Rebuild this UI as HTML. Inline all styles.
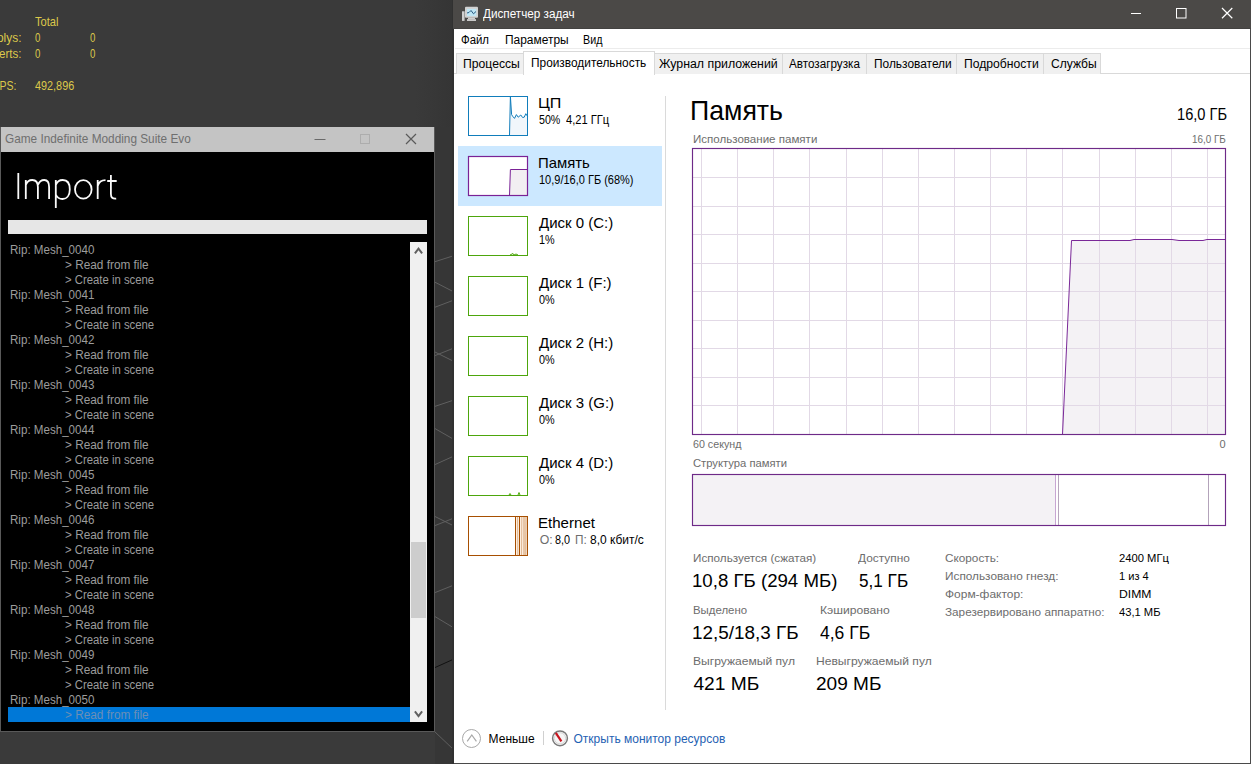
<!DOCTYPE html>
<html><head><meta charset="utf-8"><style>
html,body{margin:0;padding:0;width:1251px;height:764px;overflow:hidden;background:#3a3a3a;position:relative}
.t{position:absolute;white-space:nowrap;line-height:1;font-family:"Liberation Sans", sans-serif;transform-origin:0 0}
.a{position:absolute}
</style></head><body>
<!-- viewport lines -->
<div class="a" style="left:435px;top:127px;width:17px;height:637px;background:#363636"></div>
<div class="a" style="left:415px;top:0;width:37px;height:127px;background:linear-gradient(to right,#3a3a3a,#353535)"></div>
<svg class="a" style="left:0;top:0" width="1251" height="764">
 <g stroke="#6a6a6a" stroke-width="1" fill="none" opacity="0.8">
  <line x1="434" y1="262" x2="454" y2="255.6"/>
  <line x1="434" y1="281.7" x2="454" y2="292"/>
  <line x1="434" y1="307.6" x2="454" y2="300"/>
  <line x1="434" y1="356" x2="454" y2="348"/>
  <line x1="434" y1="351.5" x2="454" y2="361.5"/>
  <line x1="434" y1="406.7" x2="454" y2="400"/>
  <line x1="434" y1="428" x2="454" y2="439.5"/>
  <line x1="434" y1="465" x2="454" y2="456"/>
  <line x1="434" y1="516" x2="454" y2="526"/>
  <line x1="434" y1="526" x2="454" y2="518"/>
  <line x1="434" y1="593" x2="454" y2="585"/>
  <line x1="434" y1="616" x2="454" y2="628"/>
  <line x1="434" y1="731" x2="454" y2="750"/>
 </g>
 <line x1="434" y1="668" x2="454" y2="659" stroke="#111" stroke-width="1"/>
</svg>

<!-- Game window -->
<div class="a" style="left:0;top:127px;width:433px;height:604px;border:1px solid #595959;border-top:none;background:#000"></div>
<div class="a" style="left:1px;top:127px;width:433px;height:25px;background:#c4c4c4"></div>
<svg class="a" style="left:300px;top:127px" width="134" height="25">
 <line x1="14.5" y1="12.5" x2="25.5" y2="12.5" stroke="#6a6a6a" stroke-width="1"/>
 <rect x="60.5" y="7.5" width="9" height="9" fill="none" stroke="#adadad" stroke-width="1"/>
 <path d="M106 7 L116 17 M116 7 L106 17" stroke="#5a5a5a" stroke-width="1.2" fill="none"/>
</svg>
<svg class="a" style="left:0;top:0" width="130" height="215">
 <g fill="none" stroke="#fafafa" stroke-width="1.8">
  <path d="M18.3 173 V199"/>
  <path d="M25.8 180 V199 M25.8 185 C27 181.5 29.5 180 32.3 180 C36 180 37.9 182.5 37.9 187 V199 M37.9 185 C39.2 181.5 41.5 180 44.3 180 C48 180 49.1 182.5 49.1 187 V199"/>
  <path d="M55.8 180 V208 M55.8 185 C57 181.6 59.5 180 62.8 180 C67.5 180 69.8 184 69.8 189.4 C69.8 195 67 199 62.5 199 C59.3 199 57 197.3 55.8 194.5"/>
  <ellipse cx="83.3" cy="189.4" rx="8.3" ry="9.3"/>
  <path d="M97.7 180 V199 M97.7 186 C98.8 182.2 101.5 180.2 105.5 180.2"/>
  <path d="M110.9 175 V194 C110.9 197.5 112.6 199 116.2 198.6 M107.2 181 H116.7"/>
 </g>
</svg>
<div class="a" style="left:8px;top:220px;width:419px;height:14px;background:#e6e6e6"></div>
<div class="a" style="left:410px;top:242px;width:17px;height:480px;background:#f0f0f0"></div>
<div class="a" style="left:411px;top:542px;width:15px;height:76px;background:#cdcdcd"></div>
<svg class="a" style="left:410px;top:242px" width="17" height="480">
 <path d="M4.9 11.3 L8.5 6.7 L12.1 11.3" stroke="#606060" stroke-width="2" fill="none"/>
 <path d="M4.9 469.3 L8.5 474 L12.1 469.3" stroke="#606060" stroke-width="2" fill="none"/>
</svg>
<div class="a" style="left:8px;top:707px;width:402px;height:15px;background:#0078d7"></div>

<!-- Task Manager -->
<div class="a" style="left:453px;top:0;width:796px;height:763px;border:1px solid #4a4a4a;border-top:none;border-left:none;background:#fff;padding-left:1px"></div>
<div class="a" style="left:452px;top:0;width:2px;height:764px;background:#313131"></div>
<div class="a" style="left:453px;top:0;width:798px;height:29px;background:#4b4947;border-bottom:0"></div><div class="a" style="left:453px;top:28px;width:798px;height:1px;background:#434241"></div>
<svg class="a" style="left:460px;top:4px" width="20" height="20">
 <rect x="2" y="7.3" width="2.6" height="9.6" fill="#cfcfcf"/>
 <rect x="5" y="2.8" width="13" height="10.9" rx="1" fill="#d2d2d2"/>
 <rect x="7" y="4.9" width="9.3" height="7.2" fill="#bfe6f5"/>
 <path d="M7 9 L9 8.5 L11 6.5 L13.5 9.8 L16 7.5" stroke="#2a5a80" stroke-width="1" fill="none"/>
 <rect x="8" y="13.7" width="7" height="1.5" fill="#cfcfcf"/>
 <rect x="7" y="15.2" width="9" height="1.7" fill="#d8d8d8"/>
</svg>
<svg class="a" style="left:1100px;top:0" width="150" height="28">
 <line x1="31" y1="13.5" x2="41" y2="13.5" stroke="#fff" stroke-width="1"/>
 <rect x="76.5" y="8.5" width="9.5" height="9.5" fill="none" stroke="#fff" stroke-width="1"/>
 <path d="M122 8 L132.3 18.2 M132.3 8 L122 18.2" stroke="#fff" stroke-width="1.2" fill="none"/>
</svg>
<div class="a" style="left:455px;top:48px;width:795px;height:1px;background:#ececec"></div>
<div class="a" style="left:454px;top:73px;width:796px;height:1px;background:#d9d9d9"></div>
<!-- tabs -->
<div class="a" style="left:456px;top:53px;width:66px;height:20px;background:#f0f0f0;border:1px solid #d9d9d9;border-bottom:none"></div>
<div class="a" style="left:654px;top:53px;width:128px;height:20px;background:#f0f0f0;border:1px solid #d9d9d9;border-bottom:none"></div>
<div class="a" style="left:782px;top:53px;width:84px;height:20px;background:#f0f0f0;border:1px solid #d9d9d9;border-bottom:none"></div>
<div class="a" style="left:866px;top:53px;width:90px;height:20px;background:#f0f0f0;border:1px solid #d9d9d9;border-bottom:none"></div>
<div class="a" style="left:956px;top:53px;width:87px;height:20px;background:#f0f0f0;border:1px solid #d9d9d9;border-bottom:none"></div>
<div class="a" style="left:1043px;top:53px;width:56px;height:20px;background:#f0f0f0;border:1px solid #d9d9d9;border-bottom:none"></div>
<div class="a" style="left:523px;top:51px;width:130px;height:23px;background:#fff;border:1px solid #d9d9d9;border-bottom:none"></div>

<!-- left panel -->
<div class="a" style="left:458px;top:146px;width:204px;height:60px;background:#cce8ff"></div>
<div class="a" style="left:665px;top:96px;width:1px;height:614px;background:#dadada"></div>

<svg class="a" style="left:0;top:0" width="1251" height="764">
 <!-- CPU -->
 <path d="M509.5 135.5 L510.4 96.5 L511.6 114.6 L512.6 116.2 L514.5 118.4 L516.4 114.6 L518.2 117.2 L520.8 115 L522.6 117.5 L524.2 117.2 L525.8 113.7 L527.5 116.2 L527.5 135.5 Z" fill="#f1f6fb" stroke="#117dbb" stroke-width="1"/>
 <rect x="468.5" y="96.5" width="59" height="39" fill="none" stroke="#117dbb" stroke-width="1"/>
 <!-- Memory -->
 <rect x="468.5" y="156.5" width="59" height="39" fill="#fff"/>
 <path d="M509.5 195.5 L510.4 169.5 L527.5 169.5 L527.5 195.5 Z" fill="#f2eff2" stroke="#7a2296" stroke-width="1"/>
 <rect x="468.5" y="156.5" width="59" height="39" fill="none" stroke="#7a2296" stroke-width="1.2"/>
 <!-- disks -->
 <g fill="none" stroke="#4da60c" stroke-width="1">
  <rect x="468.5" y="216.5" width="59" height="39"/>
  <rect x="468.5" y="276.5" width="59" height="39"/>
  <rect x="468.5" y="336.5" width="59" height="39"/>
  <rect x="468.5" y="396.5" width="59" height="39"/>
  <rect x="468.5" y="456.5" width="59" height="39"/>
  <path d="M510 255 L512 254 L513 253.5 L514 255 L516 254 L518 255"/>
  <path d="M509 495 L510 493.5 L511 495 M518 495 L519 492.5 L520 495"/>
 </g>
 <!-- Ethernet -->
 <rect x="515.5" y="516.5" width="12" height="39" fill="#fdeee0"/>
 <g stroke="#a74f01" stroke-width="1" fill="none">
  <rect x="468.5" y="516.5" width="59" height="39"/>
  <line x1="515.5" y1="516.5" x2="515.5" y2="555.5"/>
  <line x1="519.5" y1="516.5" x2="519.5" y2="555.5"/>
  <line x1="524" y1="516.5" x2="524" y2="555.5" stroke-dasharray="1 1"/>
  <line x1="517.5" y1="516.5" x2="517.8" y2="555.5" opacity="0.35"/>
  <line x1="521.8" y1="516.5" x2="521.5" y2="555.5" opacity="0.35"/>
  <line x1="526" y1="516.5" x2="525.8" y2="555.5" opacity="0.45"/>
 </g>
</svg>

<!-- right panel memory graph -->
<svg class="a" style="left:0;top:0" width="1251" height="764">
 <path d="M1062.5 434.5 L1071.5 240.5 L1130 240.5 L1134 239.5 L1172 239.5 L1179 240.5 L1203 240.5 L1207 239.5 L1225.5 239.5 L1225.5 434.5 Z" fill="#f4f2f5"/>
 <g stroke="#e2d9e6" stroke-width="1">
  <line x1="701.5" y1="149" x2="701.5" y2="434"/>
  <line x1="737.5" y1="149" x2="737.5" y2="434"/>
  <line x1="773.5" y1="149" x2="773.5" y2="434"/>
  <line x1="809.5" y1="149" x2="809.5" y2="434"/>
  <line x1="846.5" y1="149" x2="846.5" y2="434"/>
  <line x1="882.5" y1="149" x2="882.5" y2="434"/>
  <line x1="918.5" y1="149" x2="918.5" y2="434"/>
  <line x1="954.5" y1="149" x2="954.5" y2="434"/>
  <line x1="990.5" y1="149" x2="990.5" y2="434"/>
  <line x1="1026.5" y1="149" x2="1026.5" y2="434"/>
  <line x1="1062.5" y1="149" x2="1062.5" y2="434"/>
  <line x1="1099.5" y1="149" x2="1099.5" y2="434"/>
  <line x1="1135.5" y1="149" x2="1135.5" y2="434"/>
  <line x1="1171.5" y1="149" x2="1171.5" y2="434"/>
  <line x1="1207.5" y1="149" x2="1207.5" y2="434"/>
  <line x1="693" y1="177.5" x2="1225" y2="177.5"/>
  <line x1="693" y1="206.5" x2="1225" y2="206.5"/>
  <line x1="693" y1="234.5" x2="1225" y2="234.5"/>
  <line x1="693" y1="263.5" x2="1225" y2="263.5"/>
  <line x1="693" y1="291.5" x2="1225" y2="291.5"/>
  <line x1="693" y1="320.5" x2="1225" y2="320.5"/>
  <line x1="693" y1="348.5" x2="1225" y2="348.5"/>
  <line x1="693" y1="377.5" x2="1225" y2="377.5"/>
  <line x1="693" y1="405.5" x2="1225" y2="405.5"/>
 </g>
 <path d="M1062.5 434.5 L1071.5 240.5 L1130 240.5 L1134 239.5 L1172 239.5 L1179 240.5 L1203 240.5 L1207 239.5 L1225.5 239.5" fill="none" stroke="#7a2898" stroke-width="1"/>
 <rect x="692.5" y="148.5" width="533" height="286" fill="none" stroke="#6e2a88" stroke-width="1.15"/>
 <!-- composition -->
 <rect x="692.5" y="474.5" width="363" height="51" fill="#f4f2f5"/>
 <line x1="1055.5" y1="475" x2="1055.5" y2="525" stroke="#c8a6d3" stroke-width="1"/>
 <line x1="1058.5" y1="475" x2="1058.5" y2="525" stroke="#b7a6bd" stroke-width="1"/>
 <line x1="1208.5" y1="475" x2="1208.5" y2="525" stroke="#b3a3ba" stroke-width="1"/>
 <rect x="692.5" y="474.5" width="533" height="51" fill="none" stroke="#6e2a88" stroke-width="1.15"/>
</svg>

<!-- footer -->
<svg class="a" style="left:455px;top:722px" width="130" height="34">
 <circle cx="16.5" cy="16.5" r="9" fill="none" stroke="#a8a8a8" stroke-width="1"/>
 <path d="M12.2 19.4 L16.8 13 L21.4 19.4" fill="none" stroke="#a8a8a8" stroke-width="1.2"/>
 <line x1="88.5" y1="9" x2="88.5" y2="23" stroke="#d0d0d0" stroke-width="1"/>
 <circle cx="105" cy="16.3" r="7.4" fill="#f6f6f6" stroke="#7a7a7a" stroke-width="1.5"/>
 <circle cx="105" cy="16.3" r="5.6" fill="none" stroke="#d8d8d8" stroke-width="1"/>
 <path d="M100.8 10.8 L106.4 19.4" stroke="#c8141e" stroke-width="2.2"/>
</svg>

<div class="t" style="left:34.80px;top:14.95px;font-size:13px;color:#dcc84a;transform:scaleX(0.8559);">Total</div>
<div class="t" style="left:-10.72px;top:30.95px;font-size:13px;color:#dcc84a;transform:scaleX(0.9175);">Polys:</div>
<div class="t" style="left:35.00px;top:30.95px;font-size:13px;color:#dcc84a;transform:scaleX(0.7429);">0</div>
<div class="t" style="left:89.50px;top:30.95px;font-size:13px;color:#dcc84a;transform:scaleX(0.7429);">0</div>
<div class="t" style="left:-8.50px;top:46.95px;font-size:13px;color:#dcc84a;transform:scaleX(0.8889);">Verts:</div>
<div class="t" style="left:35.00px;top:46.95px;font-size:13px;color:#dcc84a;transform:scaleX(0.7429);">0</div>
<div class="t" style="left:89.50px;top:46.95px;font-size:13px;color:#dcc84a;transform:scaleX(0.7429);">0</div>
<div class="t" style="left:-6.61px;top:78.95px;font-size:13px;color:#dcc84a;transform:scaleX(0.8064);">FPS:</div>
<div class="t" style="left:35.00px;top:78.95px;font-size:13px;color:#dcc84a;transform:scaleX(0.8340);">492,896</div>
<div class="t" style="left:4.80px;top:132.63px;font-size:12.2px;color:#6f6f6f;transform:scaleX(0.9690);">Game Indefinite Modding Suite Evo</div>
<div class="t" style="left:10.06px;top:243.54px;font-size:12.3px;color:#9c9c9c;transform:scaleX(0.9424);">Rip: Mesh_0040</div>
<div class="t" style="left:65.00px;top:258.55px;font-size:12.3px;color:#9c9c9c;transform:scaleX(0.9599);">&gt; Read from file</div>
<div class="t" style="left:65.00px;top:273.55px;font-size:12.3px;color:#9c9c9c;transform:scaleX(0.9217);">&gt; Create in scene</div>
<div class="t" style="left:10.06px;top:288.55px;font-size:12.3px;color:#9c9c9c;transform:scaleX(0.9424);">Rip: Mesh_0041</div>
<div class="t" style="left:65.00px;top:303.55px;font-size:12.3px;color:#9c9c9c;transform:scaleX(0.9599);">&gt; Read from file</div>
<div class="t" style="left:65.00px;top:318.55px;font-size:12.3px;color:#9c9c9c;transform:scaleX(0.9217);">&gt; Create in scene</div>
<div class="t" style="left:10.06px;top:333.55px;font-size:12.3px;color:#9c9c9c;transform:scaleX(0.9424);">Rip: Mesh_0042</div>
<div class="t" style="left:65.00px;top:348.55px;font-size:12.3px;color:#9c9c9c;transform:scaleX(0.9599);">&gt; Read from file</div>
<div class="t" style="left:65.00px;top:363.55px;font-size:12.3px;color:#9c9c9c;transform:scaleX(0.9217);">&gt; Create in scene</div>
<div class="t" style="left:10.06px;top:378.55px;font-size:12.3px;color:#9c9c9c;transform:scaleX(0.9424);">Rip: Mesh_0043</div>
<div class="t" style="left:65.00px;top:393.55px;font-size:12.3px;color:#9c9c9c;transform:scaleX(0.9599);">&gt; Read from file</div>
<div class="t" style="left:65.00px;top:408.55px;font-size:12.3px;color:#9c9c9c;transform:scaleX(0.9217);">&gt; Create in scene</div>
<div class="t" style="left:10.06px;top:423.55px;font-size:12.3px;color:#9c9c9c;transform:scaleX(0.9424);">Rip: Mesh_0044</div>
<div class="t" style="left:65.00px;top:438.55px;font-size:12.3px;color:#9c9c9c;transform:scaleX(0.9599);">&gt; Read from file</div>
<div class="t" style="left:65.00px;top:453.55px;font-size:12.3px;color:#9c9c9c;transform:scaleX(0.9217);">&gt; Create in scene</div>
<div class="t" style="left:10.06px;top:468.55px;font-size:12.3px;color:#9c9c9c;transform:scaleX(0.9424);">Rip: Mesh_0045</div>
<div class="t" style="left:65.00px;top:483.55px;font-size:12.3px;color:#9c9c9c;transform:scaleX(0.9599);">&gt; Read from file</div>
<div class="t" style="left:65.00px;top:498.55px;font-size:12.3px;color:#9c9c9c;transform:scaleX(0.9217);">&gt; Create in scene</div>
<div class="t" style="left:10.06px;top:513.54px;font-size:12.3px;color:#9c9c9c;transform:scaleX(0.9424);">Rip: Mesh_0046</div>
<div class="t" style="left:65.00px;top:528.54px;font-size:12.3px;color:#9c9c9c;transform:scaleX(0.9599);">&gt; Read from file</div>
<div class="t" style="left:65.00px;top:543.54px;font-size:12.3px;color:#9c9c9c;transform:scaleX(0.9217);">&gt; Create in scene</div>
<div class="t" style="left:10.06px;top:558.54px;font-size:12.3px;color:#9c9c9c;transform:scaleX(0.9424);">Rip: Mesh_0047</div>
<div class="t" style="left:65.00px;top:573.54px;font-size:12.3px;color:#9c9c9c;transform:scaleX(0.9599);">&gt; Read from file</div>
<div class="t" style="left:65.00px;top:588.54px;font-size:12.3px;color:#9c9c9c;transform:scaleX(0.9217);">&gt; Create in scene</div>
<div class="t" style="left:10.06px;top:603.54px;font-size:12.3px;color:#9c9c9c;transform:scaleX(0.9424);">Rip: Mesh_0048</div>
<div class="t" style="left:65.00px;top:618.54px;font-size:12.3px;color:#9c9c9c;transform:scaleX(0.9599);">&gt; Read from file</div>
<div class="t" style="left:65.00px;top:633.54px;font-size:12.3px;color:#9c9c9c;transform:scaleX(0.9217);">&gt; Create in scene</div>
<div class="t" style="left:10.06px;top:648.54px;font-size:12.3px;color:#9c9c9c;transform:scaleX(0.9424);">Rip: Mesh_0049</div>
<div class="t" style="left:65.00px;top:663.54px;font-size:12.3px;color:#9c9c9c;transform:scaleX(0.9599);">&gt; Read from file</div>
<div class="t" style="left:65.00px;top:678.54px;font-size:12.3px;color:#9c9c9c;transform:scaleX(0.9217);">&gt; Create in scene</div>
<div class="t" style="left:10.06px;top:693.54px;font-size:12.3px;color:#9c9c9c;transform:scaleX(0.9424);">Rip: Mesh_0050</div>
<div class="t" style="left:65.00px;top:708.54px;font-size:12.3px;color:#6b8fb6;transform:scaleX(0.9599);">&gt; Read from file</div>
<div class="t" style="left:483.30px;top:8.00px;font-size:12px;color:#ffffff;transform:scaleX(0.9763);">Диспетчер задач</div>
<div class="t" style="left:461.40px;top:33.80px;font-size:12px;color:#000;transform:scaleX(0.9492);">Файл</div>
<div class="t" style="left:504.60px;top:33.80px;font-size:12px;color:#000;transform:scaleX(0.9946);">Параметры</div>
<div class="t" style="left:582.60px;top:33.80px;font-size:12px;color:#000;transform:scaleX(0.8937);">Вид</div>
<div class="t" style="left:462.60px;top:58.30px;font-size:12px;color:#000;transform:scaleX(1.0147);">Процессы</div>
<div class="t" style="left:531.40px;top:56.60px;font-size:12px;color:#000;transform:scaleX(0.9895);">Производительность</div>
<div class="t" style="left:659.00px;top:58.30px;font-size:12px;color:#000;transform:scaleX(1.0287);">Журнал приложений</div>
<div class="t" style="left:789.40px;top:58.30px;font-size:12px;color:#000;transform:scaleX(0.9737);">Автозагрузка</div>
<div class="t" style="left:873.60px;top:58.30px;font-size:12px;color:#000;transform:scaleX(0.9920);">Пользователи</div>
<div class="t" style="left:963.60px;top:58.30px;font-size:12px;color:#000;transform:scaleX(1.0129);">Подробности</div>
<div class="t" style="left:1050.60px;top:58.30px;font-size:12px;color:#000;transform:scaleX(1.0036);">Службы</div>
<div class="t" style="left:537.93px;top:95.25px;font-size:15px;color:#000;transform:scaleX(1.0699);">ЦП</div>
<div class="t" style="left:539.30px;top:113.55px;font-size:12.3px;color:#000;transform:scaleX(0.8672);">50%</div>
<div class="t" style="left:538.01px;top:155.25px;font-size:15px;color:#000;transform:scaleX(0.9917);">Память</div>
<div class="t" style="left:539.30px;top:173.54px;font-size:12.3px;color:#000;transform:scaleX(0.8944);">10,9/16,0 ГБ (68%)</div>
<div class="t" style="left:539.00px;top:215.25px;font-size:15px;color:#000;">Диск 0 (C:)</div>
<div class="t" style="left:539.30px;top:233.54px;font-size:12.3px;color:#000;transform:scaleX(0.8801);">1%</div>
<div class="t" style="left:539.00px;top:275.25px;font-size:15px;color:#000;">Диск 1 (F:)</div>
<div class="t" style="left:539.30px;top:293.55px;font-size:12.3px;color:#000;transform:scaleX(0.8801);">0%</div>
<div class="t" style="left:539.00px;top:335.25px;font-size:15px;color:#000;">Диск 2 (H:)</div>
<div class="t" style="left:539.30px;top:353.55px;font-size:12.3px;color:#000;transform:scaleX(0.8801);">0%</div>
<div class="t" style="left:539.00px;top:395.25px;font-size:15px;color:#000;">Диск 3 (G:)</div>
<div class="t" style="left:539.30px;top:413.55px;font-size:12.3px;color:#000;transform:scaleX(0.8801);">0%</div>
<div class="t" style="left:539.00px;top:455.25px;font-size:15px;color:#000;">Диск 4 (D:)</div>
<div class="t" style="left:539.30px;top:473.55px;font-size:12.3px;color:#000;transform:scaleX(0.8801);">0%</div>
<div class="t" style="left:538.00px;top:515.25px;font-size:15px;color:#000;transform:scaleX(1.0047);">Ethernet</div>
<div class="t" style="left:566.00px;top:113.55px;font-size:12.3px;color:#000;transform:scaleX(0.9063);">4,21 ГГц</div>
<div class="t" style="left:539.80px;top:533.54px;font-size:12.3px;color:#6d6d6d;">О:</div>
<div class="t" style="left:554.70px;top:533.54px;font-size:12.3px;color:#000;transform:scaleX(0.8809);">8,0</div>
<div class="t" style="left:574.74px;top:533.54px;font-size:12.3px;color:#6d6d6d;transform:scaleX(0.9596);">П:</div>
<div class="t" style="left:590.00px;top:533.54px;font-size:12.3px;color:#000;transform:scaleX(0.9742);">8,0 кбит/с</div>
<div class="t" style="left:690.13px;top:95.78px;font-size:28.5px;color:#000;transform:scaleX(0.9366);">Память</div>
<div class="t" style="left:1176.91px;top:105.77px;font-size:16.5px;color:#000;transform:scaleX(0.8877);">16,0 ГБ</div>
<div class="t" style="left:692.50px;top:133.55px;font-size:11px;color:#6d6d6d;transform:scaleX(1.0500);">Использование памяти</div>
<div class="t" style="left:1192.40px;top:133.57px;font-size:10.5px;color:#6d6d6d;transform:scaleX(0.9406);">16,0 ГБ</div>
<div class="t" style="left:692.50px;top:438.85px;font-size:11px;color:#6d6d6d;transform:scaleX(0.9718);">60 секунд</div>
<div class="t" style="left:1219.60px;top:438.85px;font-size:11px;color:#6d6d6d;">0</div>
<div class="t" style="left:692.50px;top:457.55px;font-size:11px;color:#6d6d6d;transform:scaleX(1.0210);">Структура памяти</div>
<div class="t" style="left:693.00px;top:553.39px;font-size:11.3px;color:#6d6d6d;transform:scaleX(1.0343);">Используется (сжатая)</div>
<div class="t" style="left:858.40px;top:553.39px;font-size:11.3px;color:#6d6d6d;transform:scaleX(1.0528);">Доступно</div>
<div class="t" style="left:692.43px;top:571.38px;font-size:19.2px;color:#000;transform:scaleX(0.9710);">10,8 ГБ (294 МБ)</div>
<div class="t" style="left:859.40px;top:571.38px;font-size:19.2px;color:#000;transform:scaleX(0.8935);">5,1 ГБ</div>
<div class="t" style="left:693.00px;top:604.69px;font-size:11.3px;color:#6d6d6d;transform:scaleX(1.0100);">Выделено</div>
<div class="t" style="left:819.60px;top:604.69px;font-size:11.3px;color:#6d6d6d;transform:scaleX(1.0745);">Кэшировано</div>
<div class="t" style="left:692.42px;top:622.68px;font-size:19.2px;color:#000;transform:scaleX(0.9837);">12,5/18,3 ГБ</div>
<div class="t" style="left:819.60px;top:622.68px;font-size:19.2px;color:#000;transform:scaleX(0.9137);">4,6 ГБ</div>
<div class="t" style="left:693.00px;top:656.00px;font-size:11.3px;color:#6d6d6d;transform:scaleX(1.0699);">Выгружаемый пул</div>
<div class="t" style="left:815.90px;top:656.00px;font-size:11.3px;color:#6d6d6d;transform:scaleX(1.0698);">Невыгружаемый пул</div>
<div class="t" style="left:693.40px;top:673.68px;font-size:19.2px;color:#000;">421 МБ</div>
<div class="t" style="left:815.90px;top:673.68px;font-size:19.2px;color:#000;transform:scaleX(0.9935);">209 МБ</div>
<div class="t" style="left:944.60px;top:553.39px;font-size:11.3px;color:#6d6d6d;transform:scaleX(1.0409);">Скорость:</div>
<div class="t" style="left:944.60px;top:571.39px;font-size:11.3px;color:#6d6d6d;transform:scaleX(1.0446);">Использовано гнезд:</div>
<div class="t" style="left:944.60px;top:589.39px;font-size:11.3px;color:#6d6d6d;transform:scaleX(1.0589);">Форм-фактор:</div>
<div class="t" style="left:944.60px;top:607.39px;font-size:11.3px;color:#6d6d6d;transform:scaleX(1.0381);">Зарезервировано аппаратно:</div>
<div class="t" style="left:1119.30px;top:553.39px;font-size:11.3px;color:#000;transform:scaleX(0.9941);">2400 МГц</div>
<div class="t" style="left:1119.30px;top:571.39px;font-size:11.3px;color:#000;transform:scaleX(0.9817);">1 из 4</div>
<div class="t" style="left:1119.30px;top:589.39px;font-size:11.3px;color:#000;transform:scaleX(1.0772);">DIMM</div>
<div class="t" style="left:1119.30px;top:607.39px;font-size:11.3px;color:#000;transform:scaleX(0.9895);">43,1 МБ</div>
<div class="t" style="left:488.60px;top:733.40px;font-size:12px;color:#000;">Меньше</div>
<div class="t" style="left:573.50px;top:733.40px;font-size:12px;color:#1f62b3;">Открыть монитор ресурсов</div>
</body></html>
